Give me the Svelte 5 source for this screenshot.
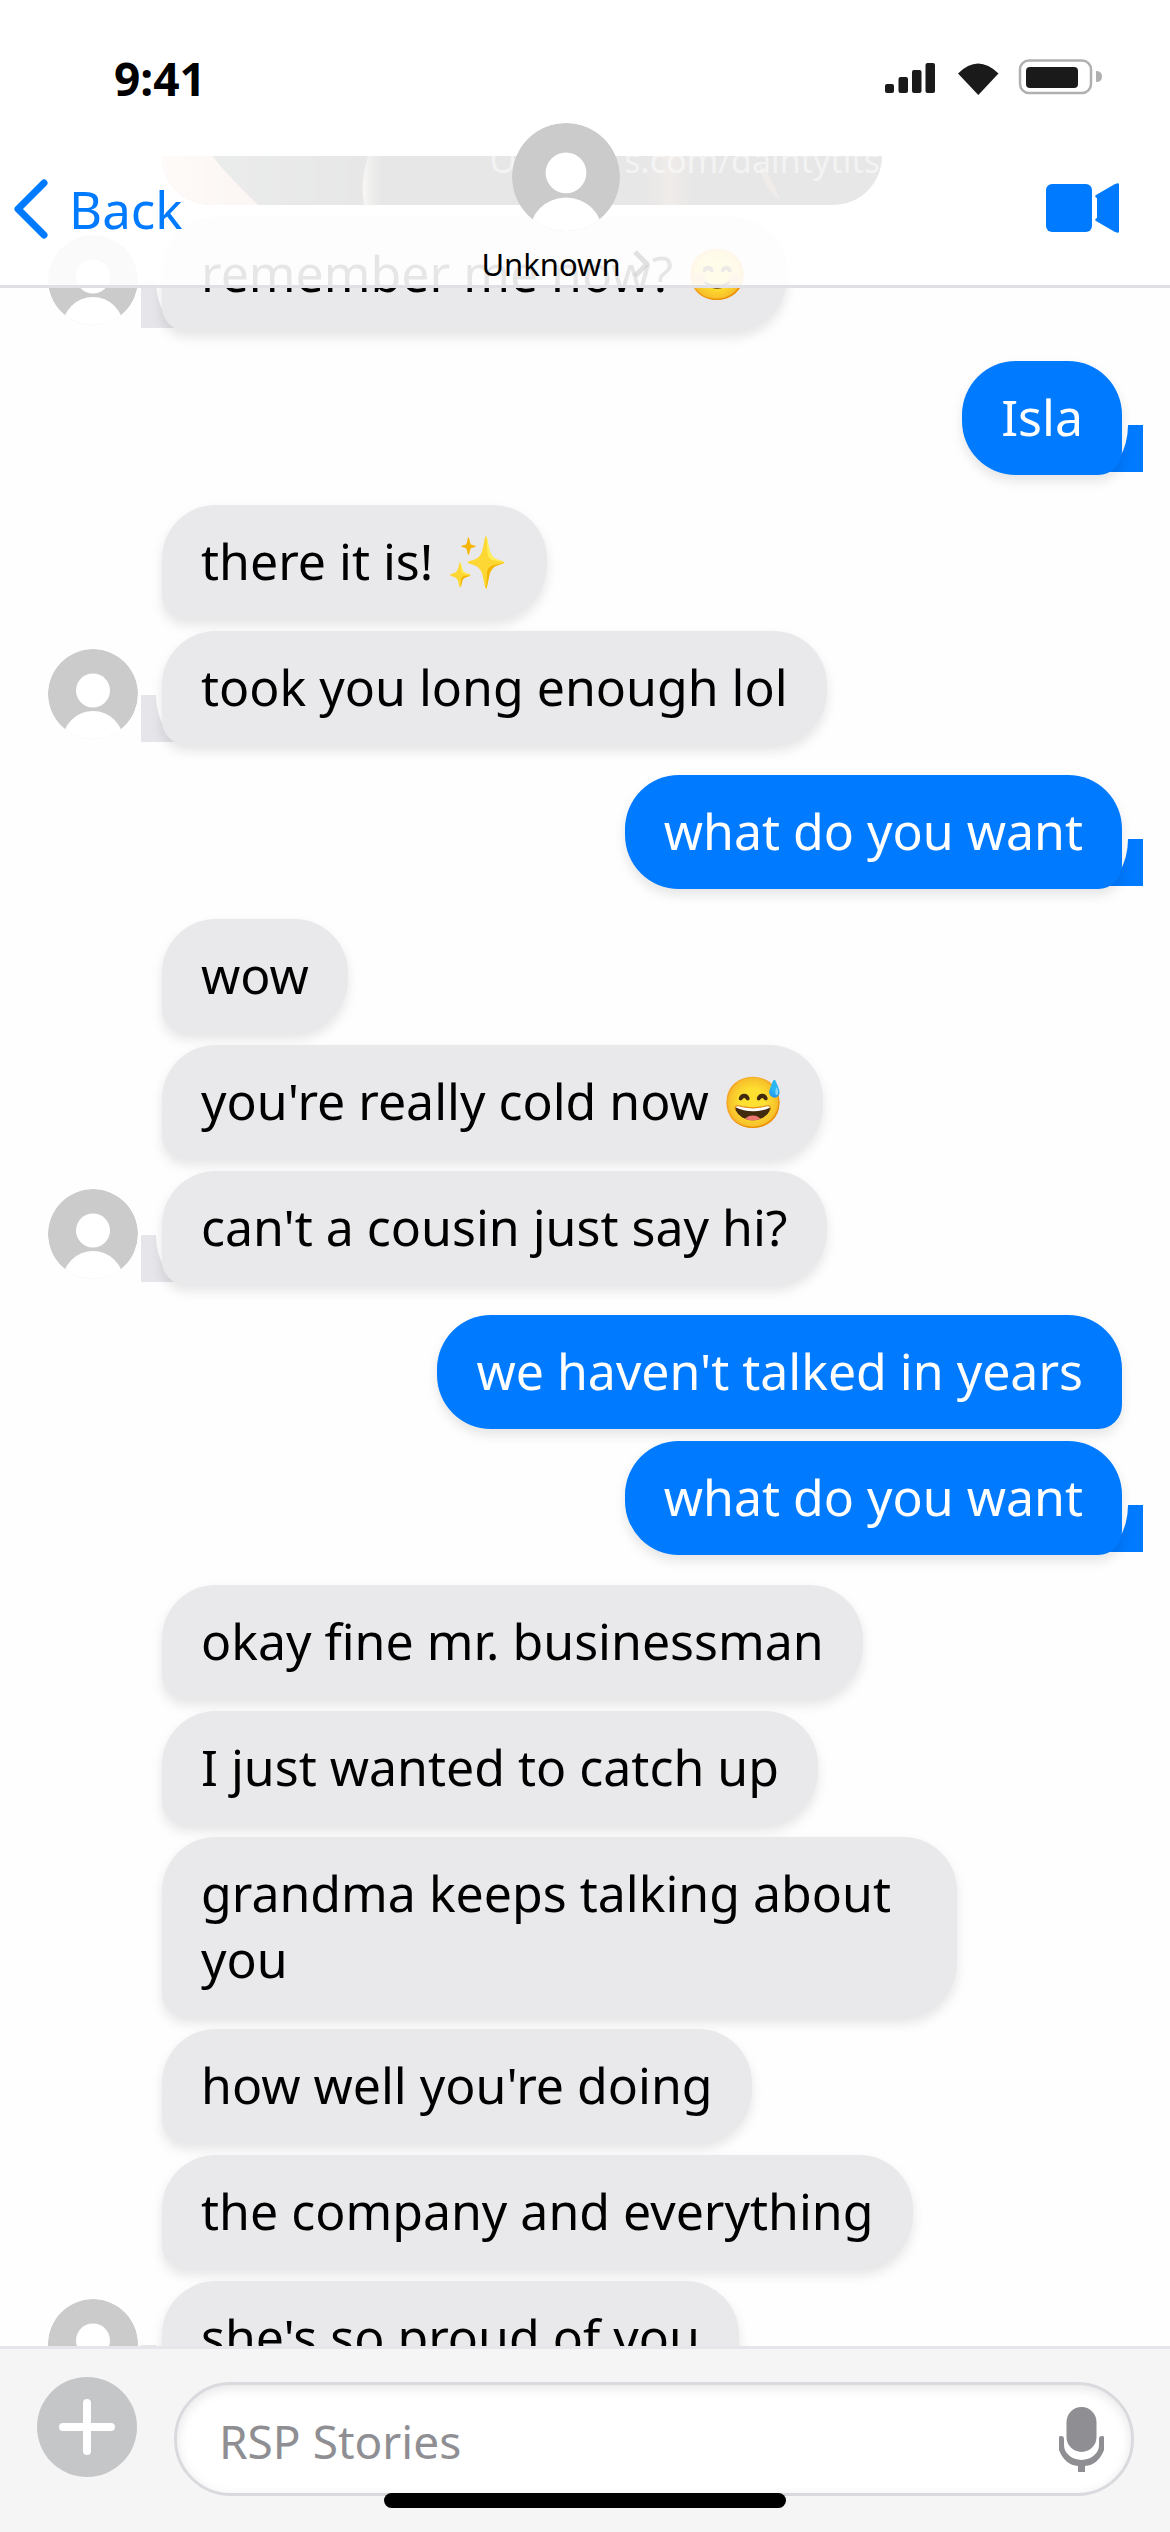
<script>
  const messages = [
    { from: 'them', text: 'remember me now? 😊', last: true },
    { from: 'me', text: 'Isla', last: true },
    { from: 'them', text: 'there it is! ✨' },
    { from: 'them', text: 'took you long enough lol', last: true },
    { from: 'me', text: 'what do you want', last: true },
    { from: 'them', text: 'wow' },
    { from: 'them', text: "you're really cold now 😅" },
    { from: 'them', text: "can't a cousin just say hi?", last: true },
    { from: 'me', text: "we haven't talked in years" },
    { from: 'me', text: 'what do you want', last: true },
    { from: 'them', text: 'okay fine mr. businessman' },
    { from: 'them', text: 'I just wanted to catch up' },
    { from: 'them', text: 'grandma keeps talking about you' },
    { from: 'them', text: "how well you're doing" },
    { from: 'them', text: 'the company and everything' },
    { from: 'them', text: "she's so proud of you", last: true }
  ];
  let draft = $state('');
</script>

{#snippet person()}
  <svg class="person" viewBox="0 0 90 90" aria-hidden="true">
    <circle cx="45" cy="45" r="45" fill="#cbcbcb" />
    <circle cx="45" cy="41.500" r="17" fill="#fff" />
    <circle cx="45" cy="92.500" r="30.500" fill="#fff" />
  </svg>
{/snippet}

<div class="phone">
  <header>
    <div class="status">
      <time>9:41</time>
      <svg class="indicators" viewBox="0 0 220 40" aria-hidden="true">
        <g fill="#1a1a1a">
          <rect x="0" y="26" width="9" height="9" rx="2" />
          <rect x="13.500" y="19" width="9.500" height="16" rx="2" />
          <rect x="27" y="12" width="9.500" height="23" rx="2" />
          <rect x="40.500" y="5" width="9.500" height="30" rx="2" />
          <path d="M73 15.500Q93 -4.500 113.500 15.500L93.300 37Z" />
          <rect x="141" y="9" width="52" height="21" rx="4" />
        </g>
        <rect x="135" y="2.500" width="71" height="32.500" rx="9" fill="none" stroke="#b0b0b0" stroke-width="2.500" />
        <path d="M211 13q6 0 6 5.500t-6 5.500Z" fill="#b0b0b0" />
      </svg>
    </div>
    <nav>
      <button class="back" type="button">
        <svg viewBox="0 0 36 60" aria-hidden="true"><path d="M31 4 5 30l26 26" fill="none" stroke="#007aff" stroke-width="7" stroke-linecap="round" stroke-linejoin="round" /></svg>
        <span>Back</span>
      </button>
      <button class="contact" type="button">
        {@render person()}
        <span class="name">Unknown
          <svg viewBox="0 0 18 30" aria-hidden="true"><path d="M2 3l12 12L2 27" fill="none" stroke="#c5c5c7" stroke-opacity=".5" stroke-width="5" stroke-linejoin="round" /></svg>
        </span>
      </button>
      <button class="video" type="button" aria-label="Video call">
        <svg viewBox="0 0 73 50" fill="#007aff" aria-hidden="true">
          <rect x="0" y="1" width="46" height="48" rx="6" />
          <path d="M50 12 69 1q4-1.500 4 0v48q0 1.500-4 0L50 38q-2-2 1-3V15q-3-1-1-3Z" />
        </svg>
      </button>
    </nav>
  </header>

  <main>
    <figure>
      <svg viewBox="0 0 720 49" preserveAspectRatio="none" aria-hidden="true">
        <defs>
          <linearGradient id="skin"><stop offset="0" stop-color="#f0d0c0" /><stop offset="1" stop-color="#d8a088" /></linearGradient>
          <linearGradient id="wall"><stop offset="0" stop-color="#404c48" /><stop offset=".3" stop-color="#0a0a0a" /></linearGradient>
          <linearGradient id="edge"><stop offset="0" stop-color="#c0b4a4" /><stop offset="1" stop-color="#2a2418" stop-opacity="0" /></linearGradient>
          <linearGradient id="glow"><stop offset="0" stop-color="#60402c" stop-opacity="0" /><stop offset=".5" stop-color="#60402c" /><stop offset="1" stop-color="#60402c" stop-opacity="0" /></linearGradient>
        </defs>
        <rect width="720" height="49" fill="url(#wall)" />
        <path d="M0 0H50Q68 22 96 49H0Z" fill="url(#skin)" />
        <path d="M206 0Q198 24 202 49H224L222 0Z" fill="url(#edge)" />
        <rect x="480" width="55" height="49" fill="url(#glow)" />
        <path d="M596 6q14 14 22 38q-16-10-22-38Z" fill="#60402c" />
      </svg>
      <figcaption><span>O</span><span>s.com/daintytits</span></figcaption>
    </figure>
    {#each messages as m, i}
      <div class="row {m.from}" class:turn={i > 0 && messages[i - 1].from !== m.from}>
        {#if m.from === 'them'}
          <div class="slot">{#if m.last}{@render person()}{/if}</div>
        {/if}
        <div class="wrap" class:tail={m.last}><p>{m.text}</p></div>
      </div>
    {/each}
  </main>

  <footer>
    <button class="plus" type="button" aria-label="Add attachment">
      <svg viewBox="0 0 56 56" aria-hidden="true"><path d="M28 4v48M4 28h48" stroke="#fff" stroke-width="8" stroke-linecap="round" /></svg>
    </button>
    <div class="field">
      <input type="text" aria-label="Message" placeholder="RSP Stories" bind:value={draft} />
      <button class="mic" type="button" aria-label="Dictate">
        <svg viewBox="0 0 45 65" aria-hidden="true">
          <rect x="7.500" y="0" width="30" height="45" rx="15" fill="#8e8e93" />
          <path d="M0 30q0-1 2-1 3 0 3 3v6a17.500 15 0 0 0 35 0v-6q0-3 3-3 2 0 2 1v13Q39 58 26 59v6h-7v-6Q6 58 0 43Z" fill="#8e8e93" />
        </svg>
      </button>
    </div>
    <div class="home"></div>
  </footer>
</div>

<style>
  :global(body) { margin: 0; background: #fefefe; }
  .phone { position: relative; display: flex; flex-direction: column; height: 100vh; overflow: hidden; background: #fefefe; color: #000; font-family: "Noto Sans", sans-serif; }
  button { border: 0; padding: 0; background: none; font: inherit; color: inherit; }
  svg { display: block; }
  header { position: absolute; inset: 0 0 auto 0; z-index: 2; box-sizing: border-box; height: 288px; border-bottom: 3px solid #e0e0e5; background: rgb(255 255 255 / .9); }
  .status { display: flex; justify-content: space-between; align-items: center; box-sizing: border-box; height: 123px; padding: 33px 65px 0 114px; }
  time { font-size: 46px; line-height: 66px; font-weight: 700; }
  .indicators { width: 220px; height: 40px; }
  nav { display: grid; grid-template-columns: 1fr auto 1fr; padding: 0 51px 0 13px; }
  .back { display: flex; align-items: center; gap: 20px; justify-self: start; align-self: start; margin-top: 53px; height: 66px; color: #007aff; font-size: 51px; line-height: 66px; }
  .back svg { width: 36px; height: 60px; }
  .contact { display: flex; flex-direction: column; align-items: center; }
  .person { border-radius: 50%; }
  .contact .person { width: 108px; height: 108px; }
  .name { display: flex; align-items: center; gap: 12px; margin-top: 12px; font-size: 31px; line-height: 42px; }
  .name svg { width: 18px; height: 30px; }
  .video { justify-self: end; align-self: start; margin-top: 60px; }
  .video svg { width: 73px; height: 50px; }
  main { flex: 1; min-height: 0; margin-top: 156px; overflow: hidden; padding: 0 48px; }
  figure { position: relative; width: 720px; height: 49px; margin: 0 0 12px 114px; border-radius: 0 0 54px 54px; overflow: hidden; }
  figure svg { width: 100%; height: 100%; }
  figcaption { position: absolute; right: 2px; top: -20px; display: flex; gap: 108px; color: #fff; opacity: .5; font-size: 34px; line-height: 48px; }
  .row { display: flex; margin-top: 12px; }
  .row.turn { margin-top: 30px; }
  .me { justify-content: flex-end; }
  .slot { display: flex; align-items: flex-end; width: 90px; flex: none; margin-right: 24px; padding-bottom: 6px; }
  .slot .person { width: 90px; height: 90px; }
  .wrap { position: relative; z-index: 0; max-width: 74%; }
  p { margin: 0; padding: 23px 39px 25px; font-size: 50px; line-height: 66px; border-radius: 54px; box-shadow: 0 6px 12px rgb(0 0 0 / .1); }
  .them p { background: #e9e9eb; border-bottom-left-radius: 24px; }
  .me p { background: #007aff; color: #fff; border-bottom-right-radius: 24px; }
  .tail::before, .tail::after { content: ""; position: absolute; z-index: -1; bottom: 3px; height: 47px; }
  .tail::before { width: 48px; }
  .tail::after { width: 30px; background: #fefefe; }
  .them .tail::before { left: -21px; background: #e5e5ea; }
  .them .tail::after { left: -6px; border-bottom-left-radius: 30px 47px; }
  .me .tail::before { right: -21px; background: #007aff; }
  .me .tail::after { right: -6px; border-bottom-right-radius: 30px 47px; }
  footer { position: relative; z-index: 2; box-sizing: border-box; flex: none; display: flex; align-items: flex-start; gap: 37px; height: 186px; padding: 28px 36px 0 37px; border-top: 3px solid #e5e5ea; background: #f5f5f5; }
  .plus { display: grid; place-items: center; flex: none; width: 100px; height: 100px; border-radius: 50%; background: #c4c6c8; }
  .plus svg { width: 56px; height: 56px; }
  .field { display: flex; align-items: center; flex: 1; box-sizing: border-box; height: 114px; margin-top: 5px; padding: 0 27px 0 42px; border: 3px solid #d9d9de; border-radius: 57px; background: #fff; box-shadow: inset 0 3px 12px rgb(0 0 0 / .1); }
  input { flex: 1; min-width: 0; border: 0; padding: 4px 0 0; outline: 0; background: none; font: 46px/66px "Noto Sans", sans-serif; color: #000; }
  input::placeholder { color: #8e8e93; opacity: 1; }
  .mic svg { width: 45px; height: 65px; }
  .home { position: absolute; left: 50%; bottom: 24px; width: 402px; height: 15px; margin-left: -201px; border-radius: 8px; background: #000; }
</style>
